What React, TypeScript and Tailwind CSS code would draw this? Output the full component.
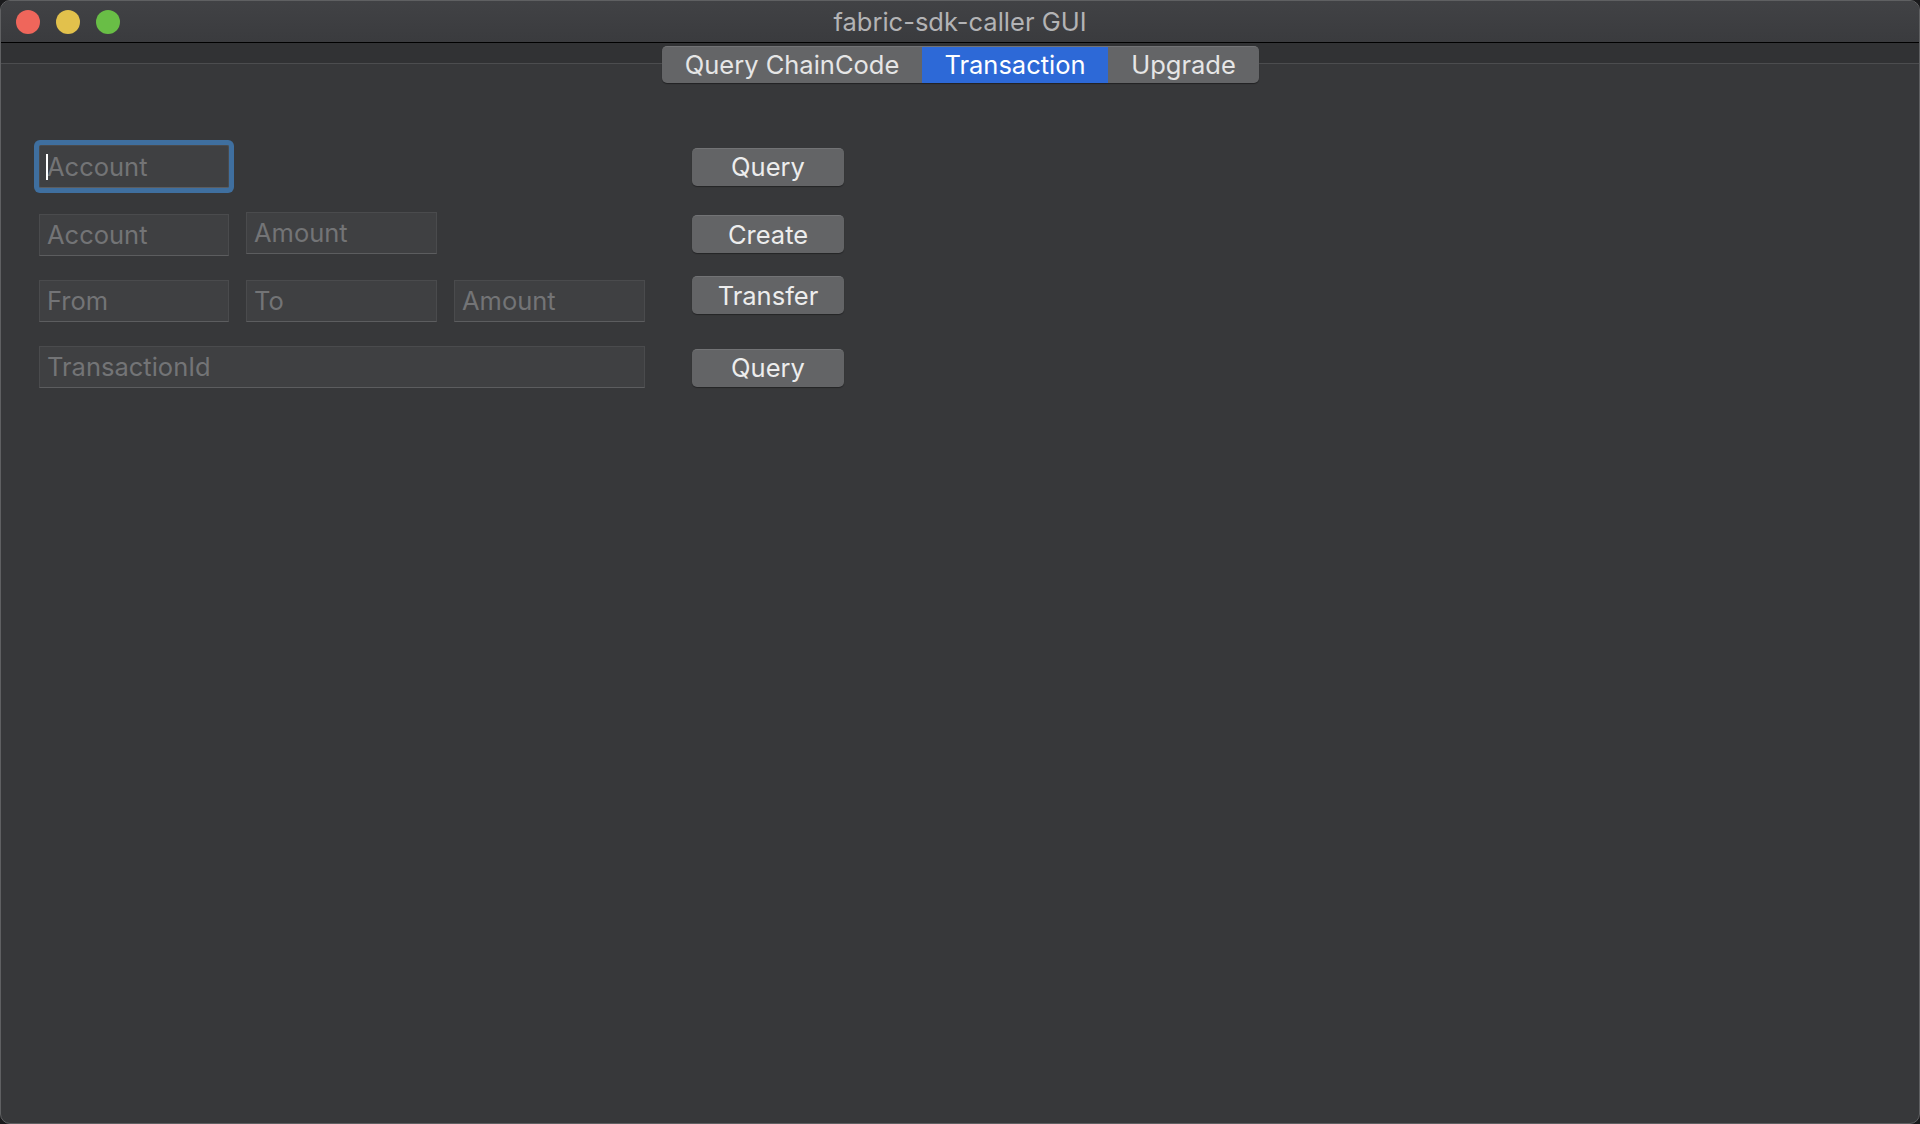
import React from "react";

const font = { fontFamily: "Inter, 'Liberation Sans', sans-serif" };

function Field({ placeholder, className = "", focused = false }: { placeholder: string; className?: string; focused?: boolean }) {
  return (
    <div
      className={
        "relative h-[42px] flex items-center pl-[7px] bg-[#3f4042] border border-[#4a4b4d] border-b-[#5c5d5f] " +
        (focused ? "ring-[5px] ring-[#3f6f9f] rounded-[2px] " : "") +
        className
      }
    >
      {focused && <span className="absolute left-[6px] top-[8px] w-[2px] h-[26px] bg-white" />}
      <span className="text-[25.5px] text-[#737476] leading-none">{placeholder}</span>
    </div>
  );
}

function Btn({ label }: { label: string }) {
  return (
    <button className="w-[152px] h-[38px] rounded-[5px] bg-[#636466] border-t border-[#727375] shadow-[0_1px_1px_rgba(0,0,0,0.35)] text-[25.5px] text-[#ededed] leading-none">
      {label}
    </button>
  );
}

export default function App() {
  return (
    <div className="w-[1920px] h-[1124px] bg-[#1a1a1c] overflow-hidden" style={font}>
      <div className="w-full h-full rounded-[10px] border border-[#5f6062] bg-[#37383a] flex flex-col overflow-hidden">
        {/* Title bar */}
        <div className="relative h-[42px] shrink-0 bg-gradient-to-b from-[#414245] to-[#3a3b3e] border-b border-black flex items-center">
          <div className="flex items-center gap-[16px] pl-[15px]">
            <span className="w-[24px] h-[24px] rounded-full bg-[#ef665b]" />
            <span className="w-[24px] h-[24px] rounded-full bg-[#e2c14c]" />
            <span className="w-[24px] h-[24px] rounded-full bg-[#69be46]" />
          </div>
          <div className="absolute inset-0 pt-[2px] flex items-center justify-center text-[25.5px] text-[#b3b3b5]">
            fabric-sdk-caller GUI
          </div>
        </div>

        {/* Tab strip */}
        <div className="relative h-[21px] shrink-0 bg-[#313234] border-b border-[#4c4d4f]">
          <div className="absolute left-[661px] top-[3px] flex h-[37px] rounded-[5px] overflow-hidden bg-[#646567] border-t border-[#727375] shadow-[0_1px_1px_rgba(0,0,0,0.4)] text-[25.5px] text-[#e6e6e6]">
            <div className="w-[260px] flex items-center justify-center">Query ChainCode</div>
            <div className="w-[186px] flex items-center justify-center bg-[#2d69d7] text-white">Transaction</div>
            <div className="w-[151px] flex items-center justify-center">Upgrade</div>
          </div>
        </div>

        {/* Content */}
        <div className="flex-1 pl-[38px] pt-[81px] flex flex-col">
          <div className="flex items-center">
            <div className="w-[606px]">
              <Field placeholder="Account" focused className="w-[190px] h-[43px]" />
            </div>
            <div className="ml-[47px]">
              <Btn label="Query" />
            </div>
          </div>

          <div className="flex items-center mt-[24px]">
            <div className="w-[606px] flex gap-[17px] items-start">
              <Field placeholder="Account" className="w-[190px] mt-[2px]" />
              <Field placeholder="Amount" className="w-[191px]" />
            </div>
            <div className="ml-[47px]">
              <Btn label="Create" />
            </div>
          </div>

          <div className="flex items-start mt-[24px]">
            <div className="w-[606px] flex gap-[17px]">
              <Field placeholder="From" className="w-[190px]" />
              <Field placeholder="To" className="w-[191px]" />
              <Field placeholder="Amount" className="w-[191px]" />
            </div>
            <div className="ml-[47px] -mt-[4px]">
              <Btn label="Transfer" />
            </div>
          </div>

          <div className="flex items-center mt-[24px]">
            <div className="w-[606px]">
              <Field placeholder="TransactionId" className="w-[606px]" />
            </div>
            <div className="ml-[47px] mt-[1px]">
              <Btn label="Query" />
            </div>
          </div>
        </div>
      </div>
    </div>
  );
}
